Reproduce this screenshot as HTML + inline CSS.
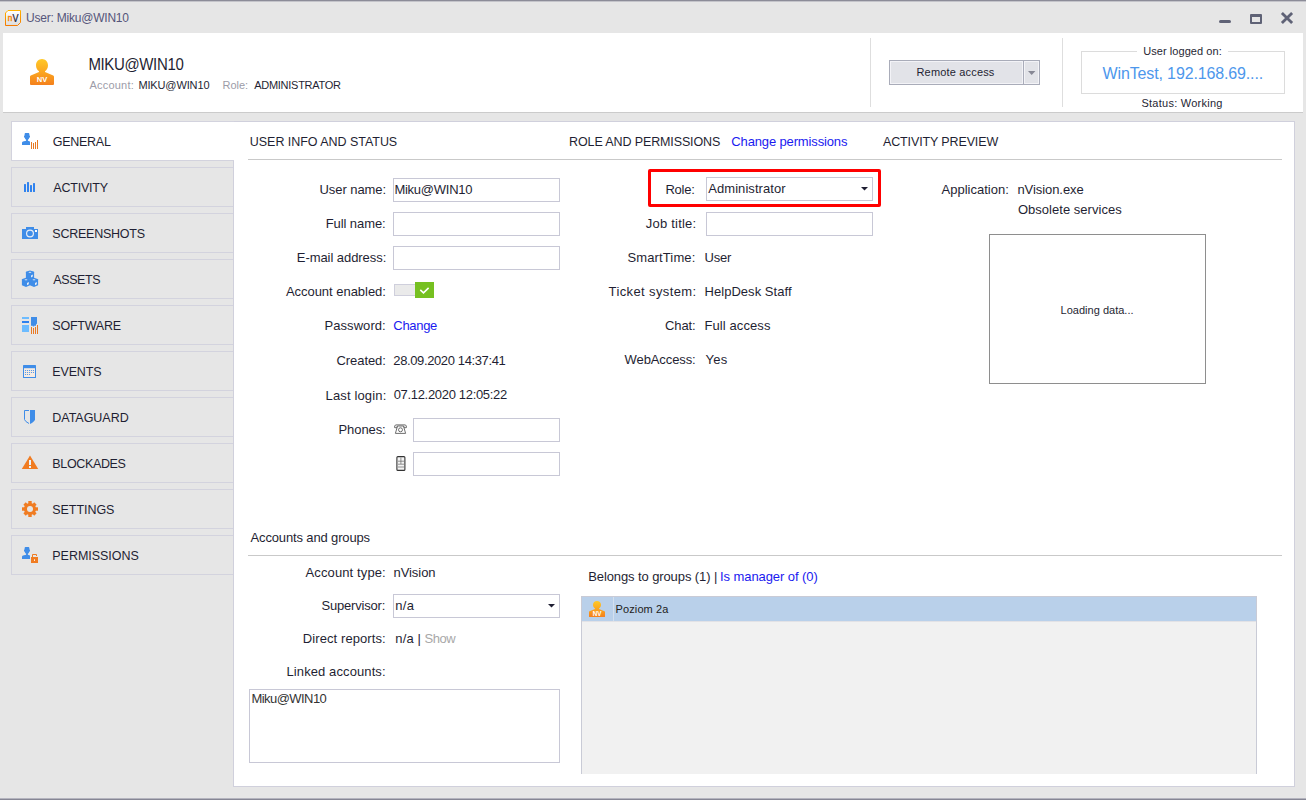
<!DOCTYPE html>
<html><head><meta charset="utf-8"><title>User: Miku@WIN10</title>
<style>
*{box-sizing:border-box;margin:0;padding:0}
html,body{width:1306px;height:800px;overflow:hidden;background:#e6e6e6;font-family:"Liberation Sans",Arial,sans-serif;font-size:13px;color:#1f1f33}
.a{position:absolute}
.t{position:absolute;white-space:nowrap;line-height:16px;height:16px}
.inp{position:absolute;background:#fff;border:1px solid #c8c8d6}
.tab{position:absolute;left:11px;width:222px;height:40px;border:1px solid #d3d3de;border-right:none;background:#e6e6e6}
.hl{position:absolute;height:1px;background:#c9c9c9}
svg{position:absolute;overflow:visible}
</style></head><body>
<!-- window frame -->
<div class="a" style="left:0;top:0;width:1306px;height:1px;background:#8c8c98"></div>
<div class="a" style="left:0;top:1px;width:1306px;height:1px;background:#c4c4ca"></div>
<div class="a" style="left:0;top:798px;width:1306px;height:1px;background:#b4b4be"></div>
<div class="a" style="left:0;top:799px;width:1306px;height:1px;background:#868694"></div>
<!-- title icon -->
<svg style="left:5px;top:10px" width="16" height="16" viewBox="0 0 16 16">
<defs><linearGradient id="tg" x1="0" y1="0" x2="0" y2="1"><stop offset="0" stop-color="#ffb300"/><stop offset="1" stop-color="#f57a00"/></linearGradient>
<linearGradient id="tf" x1="0" y1="0" x2="0" y2="1"><stop offset="0" stop-color="#ffffff"/><stop offset="1" stop-color="#dcdcdc"/></linearGradient></defs>
<path d="M3 .5H15.5V12.5L12.5 15.5H.5V3Z" fill="url(#tf)" stroke="url(#tg)" stroke-width="1"/>
<text x="2.7" y="11.2" font-family="Liberation Sans, sans-serif" font-size="8.2" fill="#f58a10" stroke="#f58a10" stroke-width=".5">n</text>
<text transform="translate(7.4 12.3) scale(.9 1)" font-family="Liberation Sans, sans-serif" font-size="10" fill="#141a36" stroke="#141a36" stroke-width=".2">V</text>
</svg>
<!-- window controls -->
<div class="a" style="left:1219px;top:20px;width:12px;height:3px;border-radius:1.5px;background:#5f6276"></div>
<div class="a" style="left:1250px;top:14px;width:12px;height:10px;border:2px solid #5f6276;border-top-width:3px;border-radius:1px"></div>
<svg style="left:1281px;top:12px" width="12" height="12" viewBox="0 0 12 12"><path d="M.9 .9L11.1 11.1M11.1 .9L.9 11.1" stroke="#5f6276" stroke-width="2.8" stroke-linecap="butt"/></svg>

<div class="a" style="left:3px;top:33px;width:1300px;height:79px;background:#fff"></div>
<div class="a" style="left:3px;top:112px;width:1300px;height:1px;background:#cbcbcb"></div>
<!-- user icon -->
<svg style="left:30px;top:59px" width="24" height="26" viewBox="0 0 24 26">
<defs><linearGradient id="ug" x1="0" y1="0" x2="0" y2="1"><stop offset="0" stop-color="#ffc928"/><stop offset="0.5" stop-color="#fba620"/><stop offset="1" stop-color="#f4801c"/></linearGradient></defs>
<path d="M12 0C15.4 0 18 2.8 18 6.2C18 8.9 16.8 11 15 12.2V13L23.2 16.6Q24 17 24 17.8V25Q24 26 23 26H1Q0 26 0 25V17.8Q0 17 .8 16.6L9 13V12.2C7.2 11 6 8.9 6 6.2C6 2.8 8.6 0 12 0Z" fill="url(#ug)"/>
<text x="12.1" y="23" text-anchor="middle" font-family="Liberation Sans, sans-serif" font-size="7.6" font-weight="bold" fill="#fff" letter-spacing="0.1">NV</text>
</svg>
<div class="a" style="left:870px;top:38px;width:1px;height:69px;background:#dedede"></div>
<div class="a" style="left:1062px;top:38px;width:1px;height:69px;background:#dedede"></div>
<!-- remote access button -->
<div class="a" style="left:889px;top:60px;width:135px;height:25px;border:1px solid #a9acb9;background:#e2e3e8;box-shadow:inset 0 0 0 1px #f3f3f7"></div>
<div class="a" style="left:1023px;top:60px;width:17px;height:25px;border:1px solid #a9acb9;background:#e2e3e8;box-shadow:inset 0 0 0 1px #f3f3f7"></div>
<svg style="left:1028px;top:71px" width="8" height="4" viewBox="0 0 8 4"><path d="M0 0H7.4L3.7 4Z" fill="#868794"/></svg>
<!-- groupbox -->
<div class="a" style="left:1081px;top:51px;width:204px;height:43px;border:1px solid #dcdcdc"></div>
<div class="a" style="left:1137px;top:51px;width:91px;height:1px;background:#fff"></div>

<!-- main panel -->
<div class="a" style="left:233px;top:121px;width:1062px;height:666px;background:#fff;border:1px solid #d0d0dc"></div>
<!-- tabs -->
<div class="tab" style="top:121px;background:#fff;width:223px"></div>
<div class="tab" style="top:167px"></div>
<div class="tab" style="top:213px"></div>
<div class="tab" style="top:259px"></div>
<div class="tab" style="top:305px"></div>
<div class="tab" style="top:351px"></div>
<div class="tab" style="top:397px"></div>
<div class="tab" style="top:443px"></div>
<div class="tab" style="top:489px"></div>
<div class="tab" style="top:535px"></div>
<!-- tab icons: coordinates are absolute page px inside one big svg -->
<svg style="left:0;top:0" width="60" height="600" viewBox="0 0 60 600">
<!-- general -->
<path transform="translate(22 133)" fill="#3f8de8" d="M3.4 0H6.6Q7.2 0 7.3 .8L7.5 2.6Q8.2 2.8 8 3.8Q7.8 4.8 7.3 4.8Q6.9 6.2 5.9 6.8V7.8L8 8.5V12H0V9.8Q0 8.8 1 8.6L4.1 7.8V6.8Q3.1 6.2 2.7 4.8Q2.2 4.8 2 3.8Q1.8 2.8 2.5 2.6L2.7 .8Q2.8 0 3.4 0Z"/>
<g transform="translate(31 140)" fill="#e97a24"><rect x="0" y="2" width="1" height="7"/><rect x="2" y="3" width="1" height="6"/><rect x="4" y="2" width="1" height="7"/><rect x="6" y="0" width="1" height="9"/></g>
<!-- activity -->
<g fill="#2f82ee"><rect x="24" y="184" width="2" height="8" rx=".5"/><rect x="27" y="182" width="2" height="10" rx=".5"/><rect x="30" y="185" width="2" height="7" rx=".5"/><rect x="33" y="183" width="2" height="9" rx=".5"/></g>
<!-- screenshots -->
<path d="M22 229H26V227H34V229H38V239H22Z" fill="#3f8de8"/>
<circle cx="30" cy="233.5" r="3.4" fill="none" stroke="#e9eef6" stroke-width="1.2"/>
<rect x="35" y="230" width="2" height="2" fill="#fff"/>
<!-- assets -->
<g fill="#3f8de8">
<path d="M30 270.5L33.6 271.6Q34.1 271.8 34.1 272.3V279H25.9V272.3Q25.9 271.8 26.4 271.6Z"/>
<path d="M26 277.8L29.6 279Q30.1 279.2 30.1 279.6V285.3L26 287.1L21.9 285.3V279.6Q21.9 279.2 22.4 279Z"/>
<path d="M34 277.8L37.6 279Q38.1 279.2 38.1 279.6V285.3L34 287.1L29.9 285.3V279.6Q29.9 279.2 30.4 279Z"/>
</g>
<g fill="#e8edf5"><path d="M31 275.4L32.8 274.4V276.6L31 277.6Z"/><path d="M27 283L28.8 282V284.2L27 285.2Z"/><path d="M35 283L36.8 282V284.2L35 285.2Z"/>
<ellipse cx="30" cy="272.3" rx="1.4" ry=".5"/><ellipse cx="26" cy="279.7" rx="1.4" ry=".5"/><ellipse cx="34" cy="279.7" rx="1.4" ry=".5"/></g>
<!-- software -->
<rect x="22" y="317" width="7" height="2" fill="#6dbcff"/><rect x="22" y="321" width="7" height="2" fill="#2f82ee"/><rect x="22" y="325" width="7" height="7" fill="#6dbcff"/>
<path d="M31 317H37V323.6L36 324.6V325.8H34.2L33.4 326.8L32.6 325.8H31Z" fill="#3f8de8"/>
<g transform="translate(31 325)" fill="#e97a24"><rect x="0" y="2" width="1" height="7"/><rect x="2" y="3" width="1" height="6"/><rect x="4" y="2" width="1" height="7"/><rect x="6" y="0" width="1" height="9"/></g>
<!-- events -->
<rect x="23" y="365" width="13" height="13" rx=".6" fill="#3f8de8"/><rect x="24" y="368.2" width="11" height="8.8" fill="#f7ece2"/>
<g fill="#3f8de8"><circle cx="25.5" cy="370.5" r=".6"/><circle cx="27.5" cy="370.5" r=".6"/><circle cx="29.5" cy="370.5" r=".6"/><circle cx="31.5" cy="370.5" r=".6"/><circle cx="33.5" cy="370.5" r=".6"/>
<circle cx="25.5" cy="372.5" r=".6"/><circle cx="27.5" cy="372.5" r=".6"/><circle cx="29.5" cy="372.5" r=".6"/><circle cx="31.5" cy="372.5" r=".6"/><circle cx="33.5" cy="372.5" r=".6"/>
<circle cx="25.5" cy="374.5" r=".6"/><circle cx="27.5" cy="374.5" r=".6"/><circle cx="29.5" cy="374.5" r=".6"/></g>
<!-- dataguard -->
<path d="M29 410.5H24.5V419.5Q25 421.5 29 423.5" fill="none" stroke="#3f8de8" stroke-width="1"/>
<path d="M30 410H35V419.6Q34.4 422 30 424Z" fill="#3f8de8"/>
<!-- blockades -->
<path d="M30 455.6L38.2 469H21.8Z" fill="#f07c22"/>
<rect x="29" y="460" width="2" height="5" fill="#eaf4fb"/><rect x="29" y="466" width="2" height="2" fill="#eaf4fb"/>
<!-- settings -->
<g fill="#f07c22" transform="translate(30 509)">
<circle r="6.1"/>
<rect x="-1.7" y="-8" width="3.4" height="16"/><rect x="-8" y="-1.7" width="16" height="3.4"/><g transform="rotate(45)"><rect x="-1.7" y="-7.7" width="3.4" height="15.4"/><rect x="-7.7" y="-1.7" width="15.4" height="3.4"/></g>
</g>
<circle cx="30" cy="509" r="3" fill="#e6e6e6"/>
<!-- permissions -->
<path transform="translate(22 547)" fill="#3f8de8" d="M3.4 0H6.6Q7.2 0 7.3 .8L7.5 2.6Q8.2 2.8 8 3.8Q7.8 4.8 7.3 4.8Q6.9 6.2 5.9 6.8V7.8L8 8.5V12H0V9.8Q0 8.8 1 8.6L4.1 7.8V6.8Q3.1 6.2 2.7 4.8Q2.2 4.8 2 3.8Q1.8 2.8 2.5 2.6L2.7 .8Q2.8 0 3.4 0Z"/>
<rect x="31" y="557" width="7" height="6" fill="#f07c22"/>
<path d="M32.5 557V554.5H36.5V556" fill="none" stroke="#f07c22" stroke-width="1"/>
<rect x="34" y="559" width="1" height="2" rx=".4" fill="#fff"/>
</svg>

<div class="hl" style="left:248px;top:159px;width:1034px"></div>
<div class="hl" style="left:248px;top:555px;width:1034px"></div>
<!-- col1 inputs -->
<div class="inp" style="left:393px;top:178px;width:167px;height:24px"></div>
<div class="inp" style="left:393px;top:212px;width:167px;height:24px"></div>
<div class="inp" style="left:393px;top:246px;width:167px;height:24px"></div>
<div class="inp" style="left:413px;top:418px;width:147px;height:24px"></div>
<div class="inp" style="left:413px;top:452px;width:147px;height:24px"></div>
<!-- toggle -->
<div class="a" style="left:394px;top:284px;width:22px;height:12px;border:1px solid #cfcfdc;background:#eaeaea"></div>
<div class="a" style="left:415px;top:282px;width:19px;height:16px;background:#76c021"></div>
<svg style="left:415px;top:282px" width="19" height="16" viewBox="0 0 19 16"><path d="M5.3 7.9L8.5 10.9L13.6 5.9" fill="none" stroke="#fff" stroke-width="1.5"/></svg>
<!-- phone icons -->
<svg style="left:394px;top:424px" width="13" height="10" viewBox="0 0 13 10"><g fill="none" stroke="#555" stroke-width=".85"><path d="M.6 3.6Q.2 1 2 .9H11Q12.8 1 12.4 3.6L10.4 3.8L9.6 2H3.4L2.6 3.8Z"/><path d="M3.4 2.4L1.4 9.4H11.6L9.6 2.4"/><circle cx="6.5" cy="5.8" r="2"/></g></svg>
<svg style="left:396px;top:456px" width="10" height="15" viewBox="0 0 10 15"><rect x=".9" y=".6" width="8" height="13.8" rx="1" fill="#f4f4f4" stroke="#333" stroke-width="1.1"/><path d="M2 5.2H8M2 8.2H8M2 11H8M4.9 1.5V8" stroke="#666" stroke-width=".7" fill="none"/></svg>
<!-- red highlight -->
<div class="a" style="left:648px;top:169px;width:233px;height:38px;border:3px solid #ff0000;border-radius:2px"></div>
<!-- col2 inputs -->
<div class="inp" style="left:706px;top:177px;width:167px;height:24px"></div>
<svg style="left:861px;top:187px" width="7" height="4" viewBox="0 0 7 4"><path d="M0 0H7L3.5 3.6Z" fill="#1f1f33"/></svg>
<div class="inp" style="left:706px;top:212px;width:167px;height:24px"></div>
<!-- preview -->
<div class="a" style="left:989px;top:234px;width:217px;height:150px;border:1px solid #8e8e8e;background:#fff"></div>
<!-- supervisor -->
<div class="inp" style="left:393px;top:594px;width:167px;height:24px"></div>
<svg style="left:548px;top:604px" width="7" height="4" viewBox="0 0 7 4"><path d="M0 0H7L3.5 3.6Z" fill="#1f1f33"/></svg>
<!-- linked accounts -->
<div class="inp" style="left:249px;top:689px;width:311px;height:74px"></div>
<!-- group list -->
<div class="a" style="left:581px;top:596px;width:676px;height:178px;background:#f1f1f1;border:1px solid #c9cbd6;border-bottom:none"></div>
<div class="a" style="left:582px;top:597px;width:674px;height:24px;background:#b9d0ea"></div>
<div class="a" style="left:582px;top:621px;width:674px;height:1px;background:#e2e2e6"></div>
<div class="a" style="left:613px;top:597px;width:1px;height:24px;background:#d4e0ee"></div>
<svg style="left:589px;top:601px" width="16" height="16" viewBox="0 0 24 26" preserveAspectRatio="none">
<path d="M12 0C15.4 0 18 2.8 18 6.2C18 8.9 16.8 11 15 12.2V13L23.2 16.6Q24 17 24 17.8V25Q24 26 23 26H1Q0 26 0 25V17.8Q0 17 .8 16.6L9 13V12.2C7.2 11 6 8.9 6 6.2C6 2.8 8.6 0 12 0Z" fill="url(#ug)"/>
<text x="5.6" y="24.2" textLength="13.2" lengthAdjust="spacingAndGlyphs" font-family="Liberation Sans, sans-serif" font-size="10.7" font-weight="bold" fill="#fff">NV</text>
</svg>

<div class="t" style="left:26.1px;top:10px;font-size:12px;color:#55557a;letter-spacing:-0.22px;">User: Miku@WIN10</div>
<div class="t" style="left:88.4px;top:57px;font-size:15px;color:#1f1f33;letter-spacing:-0.36px;transform:scaleY(1.09);transform-origin:0 13px;">MIKU@WIN10</div>
<div class="t" style="left:89.4px;top:77px;font-size:11px;color:#9c9ca8;letter-spacing:0.23px;">Account:</div>
<div class="t" style="left:138.4px;top:77px;font-size:11px;color:#1f1f33;letter-spacing:-0.13px;">MIKU@WIN10</div>
<div class="t" style="left:222.6px;top:77px;font-size:11px;color:#9c9ca8;letter-spacing:-0.03px;">Role:</div>
<div class="t" style="left:254.2px;top:77px;font-size:11px;color:#1f1f33;letter-spacing:-0.27px;">ADMINISTRATOR</div>
<div class="t" style="left:916.5px;top:64px;font-size:11px;color:#1f1f33;letter-spacing:0.17px;">Remote access</div>
<div class="t" style="left:1143.2px;top:43px;font-size:11px;color:#1f1f33;letter-spacing:0.06px;">User logged on:</div>
<div class="t" style="left:1102.6px;top:66px;font-size:16px;color:#4d97ec;letter-spacing:-0.14px;">WinTest, 192.168.69....</div>
<div class="t" style="left:1141.4px;top:95px;font-size:11px;color:#1f1f33;letter-spacing:0.26px;">Status: Working</div>
<div class="t" style="left:52.7px;top:134px;font-size:12.5px;color:#1f1f33;letter-spacing:-0.26px;">GENERAL</div>
<div class="t" style="left:53.3px;top:180px;font-size:12.5px;color:#1f1f33;letter-spacing:-0.21px;">ACTIVITY</div>
<div class="t" style="left:52.3px;top:226px;font-size:12.5px;color:#1f1f33;letter-spacing:-0.24px;">SCREENSHOTS</div>
<div class="t" style="left:53.3px;top:272px;font-size:12.5px;color:#1f1f33;letter-spacing:-0.42px;">ASSETS</div>
<div class="t" style="left:52.3px;top:318px;font-size:12.5px;color:#1f1f33;letter-spacing:-0.23px;">SOFTWARE</div>
<div class="t" style="left:52.3px;top:364px;font-size:12.5px;color:#1f1f33;letter-spacing:-0.16px;">EVENTS</div>
<div class="t" style="left:52.3px;top:410px;font-size:12.5px;color:#1f1f33;letter-spacing:-0.03px;">DATAGUARD</div>
<div class="t" style="left:52.3px;top:456px;font-size:12.5px;color:#1f1f33;letter-spacing:-0.35px;">BLOCKADES</div>
<div class="t" style="left:52.3px;top:502px;font-size:12.5px;color:#1f1f33;letter-spacing:-0.06px;">SETTINGS</div>
<div class="t" style="left:52.3px;top:548px;font-size:12.5px;color:#1f1f33;letter-spacing:-0.04px;">PERMISSIONS</div>
<div class="t" style="left:249.8px;top:134px;font-size:12.5px;color:#1f1f33;letter-spacing:-0.04px;">USER INFO AND STATUS</div>
<div class="t" style="left:569.1px;top:134px;font-size:12.5px;color:#1f1f33;letter-spacing:-0.12px;">ROLE AND PERMISSIONS</div>
<div class="t" style="left:731.3px;top:134px;font-size:13px;color:#1a1af0;letter-spacing:-0.14px;">Change permissions</div>
<div class="t" style="left:883px;top:134px;font-size:12.5px;color:#1f1f33;letter-spacing:-0.13px;">ACTIVITY PREVIEW</div>
<div class="t" style="left:319.5px;top:182px;font-size:13px;color:#1f1f33;letter-spacing:-0.06px;">User name:</div>
<div class="t" style="left:325.7px;top:216px;font-size:13px;color:#1f1f33;letter-spacing:-0.08px;">Full name:</div>
<div class="t" style="left:296.8px;top:250px;font-size:13px;color:#1f1f33;letter-spacing:-0.06px;">E-mail address:</div>
<div class="t" style="left:285.9px;top:284px;font-size:13px;color:#1f1f33;letter-spacing:-0.03px;">Account enabled:</div>
<div class="t" style="left:324.5px;top:318px;font-size:13px;color:#1f1f33;letter-spacing:0.06px;">Password:</div>
<div class="t" style="left:336.5px;top:353px;font-size:13px;color:#1f1f33;letter-spacing:-0.07px;">Created:</div>
<div class="t" style="left:325.5px;top:388px;font-size:13px;color:#1f1f33;letter-spacing:0.15px;">Last login:</div>
<div class="t" style="left:338.5px;top:422px;font-size:13px;color:#1f1f33;letter-spacing:-0.08px;">Phones:</div>
<div class="t" style="left:394.4px;top:182px;font-size:13px;color:#1f1f33;letter-spacing:-0.25px;">Miku@WIN10</div>
<div class="t" style="left:393.3px;top:318px;font-size:13px;color:#1a1af0;letter-spacing:-0.3px;">Change</div>
<div class="t" style="left:393.3px;top:353px;font-size:13px;color:#1f1f33;letter-spacing:-0.38px;">28.09.2020 14:37:41</div>
<div class="t" style="left:393.7px;top:387px;font-size:13px;color:#1f1f33;letter-spacing:-0.32px;">07.12.2020 12:05:22</div>
<div class="t" style="left:665.4px;top:182px;font-size:13px;color:#1f1f33;letter-spacing:-0.2px;">Role:</div>
<div class="t" style="left:645.8px;top:216px;font-size:13px;color:#1f1f33;letter-spacing:0.21px;">Job title:</div>
<div class="t" style="left:627.4px;top:250px;font-size:13px;color:#1f1f33;letter-spacing:0.14px;">SmartTime:</div>
<div class="t" style="left:608.6px;top:284px;font-size:13px;color:#1f1f33;letter-spacing:0.38px;">Ticket system:</div>
<div class="t" style="left:665.1px;top:318px;font-size:13px;color:#1f1f33;letter-spacing:-0.15px;">Chat:</div>
<div class="t" style="left:624.6px;top:352px;font-size:13px;color:#1f1f33;letter-spacing:-0.1px;">WebAccess:</div>
<div class="t" style="left:708.2px;top:181px;font-size:13px;color:#1f1f33;letter-spacing:0.07px;">Administrator</div>
<div class="t" style="left:704.5px;top:250px;font-size:13px;color:#1f1f33;letter-spacing:-0.19px;">User</div>
<div class="t" style="left:704.5px;top:284px;font-size:13px;color:#1f1f33;letter-spacing:0.04px;">HelpDesk Staff</div>
<div class="t" style="left:704.5px;top:318px;font-size:13px;color:#1f1f33;letter-spacing:0.09px;">Full access</div>
<div class="t" style="left:705.5px;top:352px;font-size:13px;color:#1f1f33;letter-spacing:0.31px;">Yes</div>
<div class="t" style="left:941.6px;top:182px;font-size:13px;color:#1f1f33;">Application:</div>
<div class="t" style="left:1017.4px;top:182px;font-size:13px;color:#1f1f33;letter-spacing:-0.06px;">nVision.exe</div>
<div class="t" style="left:1017.9px;top:202px;font-size:13px;color:#1f1f33;letter-spacing:0.03px;">Obsolete services</div>
<div class="t" style="left:1060.6px;top:302px;font-size:11px;color:#1f1f33;letter-spacing:0.01px;">Loading data...</div>
<div class="t" style="left:250.5px;top:530px;font-size:13px;color:#1f1f33;letter-spacing:-0.14px;">Accounts and groups</div>
<div class="t" style="left:305.5px;top:565px;font-size:13px;color:#1f1f33;letter-spacing:0.12px;">Account type:</div>
<div class="t" style="left:393.5px;top:565px;font-size:13px;color:#1f1f33;letter-spacing:-0.06px;">nVision</div>
<div class="t" style="left:321.5px;top:598px;font-size:13px;color:#1f1f33;letter-spacing:-0.2px;">Supervisor:</div>
<div class="t" style="left:395.3px;top:598px;font-size:13px;color:#1f1f33;letter-spacing:0.25px;">n/a</div>
<div class="t" style="left:302.8px;top:631px;font-size:13px;color:#1f1f33;letter-spacing:0.09px;">Direct reports:</div>
<div class="t" style="left:395.3px;top:631px;font-size:13px;color:#1f1f33;letter-spacing:0.15px;">n/a |</div>
<div class="t" style="left:424.5px;top:631px;font-size:13px;color:#a8a8a8;letter-spacing:-0.42px;">Show</div>
<div class="t" style="left:286.5px;top:664px;font-size:13px;color:#1f1f33;letter-spacing:0.1px;">Linked accounts:</div>
<div class="t" style="left:251.5px;top:691px;font-size:13px;color:#333;letter-spacing:-0.56px;">Miku@WIN10</div>
<div class="t" style="left:588.2px;top:569px;font-size:13px;color:#1f1f33;letter-spacing:-0.1px;">Belongs to groups (1) |</div>
<div class="t" style="left:720px;top:569px;font-size:13px;color:#1a1af0;letter-spacing:-0.08px;">Is manager of (0)</div>
<div class="t" style="left:615.5px;top:601px;font-size:11px;color:#222;letter-spacing:0.12px;">Poziom 2a</div>
</body></html>
